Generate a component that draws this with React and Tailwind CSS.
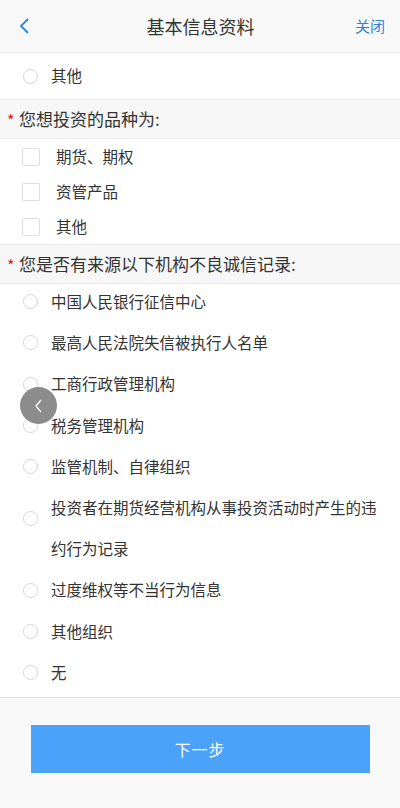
import { useState } from "react";

const font = { fontFamily: '"Noto Sans CJK SC", "Noto Sans", sans-serif' };

function Radio() {
  return <span className="block w-[15px] h-[15px] rounded-full border border-[#d6d6d6] bg-white shrink-0"></span>;
}

function Check() {
  return <span className="block w-[18px] h-[18px] rounded-[2px] border border-[#dedede] bg-white shrink-0"></span>;
}

function SectionTitle({ children }) {
  return (
    <div className="h-[40px] bg-[#f7f7f7] border-y border-[#ebebeb] flex items-center pl-[7px] text-[17px] text-[#333]">
      <span className="text-[#d4231c] w-[12px] text-[16px] leading-none mt-[2px]">*</span>
      <span>{children}</span>
    </div>
  );
}

const kinds = ["期货、期权", "资管产品", "其他"];

const records = [
  "中国人民银行征信中心",
  "最高人民法院失信被执行人名单",
  "工商行政管理机构",
  "税务管理机构",
  "监管机制、自律组织",
  "投资者在期货经营机构从事投资活动时产生的违约行为记录",
  "过度维权等不当行为信息",
  "其他组织",
  "无",
];

export default function App() {
  const [list] = useState(records);
  return (
    <div className="w-[400px] h-[808px] bg-white flex flex-col relative overflow-hidden" style={font}>
      <header className="h-[53px] shrink-0 bg-[#f8f8f8] border-b border-[#e6e6e6] flex items-center justify-between px-[15px]">
        <svg width="14" height="18" viewBox="0 0 14 18" className="ml-[3px]">
          <path d="M10 2 L3 9 L10 16" fill="none" stroke="#2f84d6" strokeWidth="1.8" />
        </svg>
        <h1 className="text-[18px] text-[#333] ml-[14px]">基本信息资料</h1>
        <span className="text-[15px] text-[#2f86d8]">关闭</span>
      </header>

      <div className="h-[46px] shrink-0 flex items-center pl-[23px] gap-[13px] text-[15.5px] text-[#333]">
        <Radio />
        <span>其他</span>
      </div>

      <SectionTitle>您想投资的品种为:</SectionTitle>

      <div className="shrink-0">
        {kinds.map((k) => (
          <div key={k} className="h-[35px] flex items-center pl-[22px] gap-[16px] text-[15.5px] text-[#333]">
            <Check />
            <span>{k}</span>
          </div>
        ))}
      </div>

      <SectionTitle>您是否有来源以下机构不良诚信记录:</SectionTitle>

      <div className="flex-1 -mt-[3px] border-b border-[#e6e6e6]">
        {list.map((r, i) => (
          <div key={r} className="flex items-center pl-[23px] pr-[18px] gap-[13px] text-[15.5px] text-[#333] leading-[41.2px]">
            <span className={i === 5 ? "-translate-y-[10px]" : ""}>
              <Radio />
            </span>
            <span>{r}</span>
          </div>
        ))}
      </div>

      <footer className="h-[110px] shrink-0 bg-[#f8f8f8] flex items-start justify-center pt-[27px]">
        <button className="w-[339px] h-[48px] bg-[#4aa2fb] text-white text-[16px] tracking-[1px]">下一步</button>
      </footer>

      <div className="absolute left-[20px] top-[387px] w-[37px] h-[37px] rounded-full bg-[#8c8c8c] flex items-center justify-center">
        <svg width="12" height="16" viewBox="0 0 12 16">
          <path d="M8 2 L3 8 L8 14" fill="none" stroke="#fff" strokeWidth="1.2" />
        </svg>
      </div>
    </div>
  );
}
